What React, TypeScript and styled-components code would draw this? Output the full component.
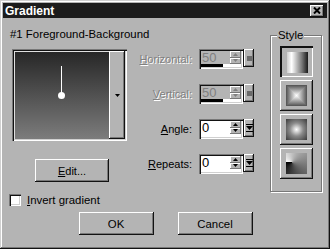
import React from "react";
import styled, { createGlobalStyle, css } from "styled-components";

const FACE = "#b4b4b4";
const SHADOW = "#787878";
const DARK = "#121212";
const LIGHT = "#ffffff";

const Global = createGlobalStyle`
  html, body { margin: 0; padding: 0; background: ${FACE}; }
  body { font-family: "Liberation Sans", Arial, sans-serif; font-size: 11px; color: #000; }
  * { box-sizing: border-box; }
`;

const raised = css`
  background: ${FACE};
  box-shadow: inset -1px -1px ${DARK}, inset 1px 1px ${LIGHT}, inset -2px -2px ${SHADOW};
`;

const Window = styled.div`
  width: 330px;
  height: 249px;
  padding: 3px;
  display: flex;
  flex-direction: column;
  background: ${FACE};
  box-shadow: inset -1px -1px ${DARK}, inset 1px 1px #d0d0d0, inset -2px -2px ${SHADOW}, inset 2px 2px ${LIGHT};
`;

const TitleBar = styled.div`
  height: 15px;
  flex: none;
  display: flex;
  align-items: center;
  justify-content: space-between;
  padding: 0 3px 0 2px;
  background: #1c1c1c;
  color: #fff;
  font-weight: bold;
  font-size: 12px;
`;

const CloseButton = styled.div`
  width: 14px;
  height: 12px;
  display: flex;
  align-items: center;
  justify-content: center;
  ${raised};
`;

const Content = styled.div`
  flex: 1;
  display: flex;
  flex-direction: column;
  padding: 0 5px 0 6px;
`;

const TopArea = styled.div`
  display: flex;
  height: 174px;
`;

const LeftCol = styled.div`
  width: 121px;
  padding-top: 10px;
  display: flex;
  flex-direction: column;
  align-items: flex-start;
`;

const SetName = styled.div`
  margin-left: 1px;
  line-height: 13px;
  white-space: nowrap;
  font-size: 11.4px;
`;

const PreviewFrame = styled.div`
  margin-top: 8px;
  margin-left: 3px;
  width: 115px;
  height: 92px;
  display: flex;
  padding: 2px;
  background: ${FACE};
  box-shadow: inset 1px 1px ${SHADOW}, inset 2px 2px ${DARK}, inset -1px -1px ${LIGHT}, inset -2px -2px #d0d0d0;
`;

const GradientArea = styled.div`
  flex: 1;
  position: relative;
  background: linear-gradient(to bottom, #262626, #7c7c7c);
  box-shadow: inset 1px 1px #e0e0e0;
`;

const HandleLine = styled.div`
  position: absolute;
  left: 47px;
  top: 15px;
  width: 1px;
  height: 27px;
  background: #fff;
`;

const HandleDot = styled.div`
  position: absolute;
  left: 44px;
  top: 41px;
  width: 7px;
  height: 7px;
  border-radius: 50%;
  background: #fff;
`;

const DropButton = styled.div`
  width: 16px;
  display: flex;
  align-items: center;
  justify-content: center;
  ${raised};
`;

const EditButton = styled.div`
  margin-top: 18px;
  margin-left: 26px;
  width: 74px;
  height: 23px;
  display: flex;
  align-items: center;
  justify-content: center;
  ${raised};
`;

const MidCol = styled.div`
  width: 124px;
  padding-top: 31px;
  display: flex;
  flex-direction: column;
  gap: 15px;
`;

const Row = styled.div`
  height: 20px;
  display: flex;
  align-items: center;
  justify-content: flex-end;
  gap: 7px;
`;

const FieldLabel = styled.span<{ $disabled?: boolean }>`
  white-space: nowrap;
  color: ${(p) => (p.$disabled ? "#808080" : "#000")};
  text-shadow: ${(p) => (p.$disabled ? "1px 1px 0 #fff" : "none")};
`;

const SpinControl = styled.div`
  display: flex;
  align-items: flex-start;
  height: 20px;
`;

const SunkenBox = styled.div`
  width: 44px;
  height: 20px;
  display: flex;
  flex-direction: column;
  padding: 2px;
  background: ${FACE};
  box-shadow: inset 1px 1px ${SHADOW}, inset 2px 2px ${DARK}, inset -1px -1px ${LIGHT}, inset -2px -2px #d0d0d0;
`;

const FieldRow = styled.div`
  flex: 1;
  display: flex;
`;

const ValueText = styled.div<{ $disabled?: boolean }>`
  flex: 1;
  font-size: 13px;
  line-height: 13px;
  padding-left: 1px;
  background: ${(p) => (p.$disabled ? FACE : "#fff")};
  color: ${(p) => (p.$disabled ? "#808080" : "#000")};
`;

const SpinCol = styled.div`
  width: 11px;
  display: flex;
  flex-direction: column;
`;

const SpinBtn = styled.div`
  flex: 1;
  display: flex;
  align-items: center;
  justify-content: center;
  background: ${FACE};
  box-shadow: inset -1px -1px ${SHADOW}, inset 1px 1px ${LIGHT};
`;

const Bar = styled.div`
  height: 3px;
  background: #fff;
  display: flex;
`;

const BarFill = styled.div`
  background: #000;
  height: 100%;
`;

const PopButton = styled.div`
  width: 11px;
  height: 18px;
  display: flex;
  align-items: center;
  justify-content: center;
  border-left: 1px solid ${DARK};
  ${raised};
`;

const GrayBlock = styled.div`
  width: 5px;
  height: 5px;
  background: #6a6a6a;
`;

const StyleGroup = styled.div`
  margin-left: auto;
  margin-top: 17px;
  width: 52px;
  height: 157px;
  border: 1px solid ${SHADOW};
  box-shadow: inset 1px 1px ${LIGHT}, 1px 1px 0 ${LIGHT};
  display: flex;
  flex-direction: column;
  align-items: center;
`;

const Caption = styled.div`
  align-self: flex-start;
  margin-top: -7px;
  margin-left: 6px;
  padding: 0 1px;
  line-height: 13px;
  font-size: 11.4px;
  background: ${FACE};
`;

const StyleList = styled.div`
  margin-top: 4px;
  display: flex;
  flex-direction: column;
  gap: 3px;
`;

const StyleBtn = styled.div<{ $pressed?: boolean }>`
  width: 33px;
  height: 31px;
  display: flex;
  align-items: center;
  justify-content: center;
  padding: ${(p) => (p.$pressed ? "2px 0 0 2px" : "0")};
  background: ${FACE};
  box-shadow: ${(p) =>
    p.$pressed
      ? `inset 1px 1px ${DARK}, inset 2px 2px ${DARK}, inset -1px -1px ${LIGHT}`
      : `inset -1px -1px ${DARK}, inset 1px 1px ${LIGHT}, inset -2px -2px ${SHADOW}`};
`;

const swatchBg: Record<string, string> = {
  linear: "background: linear-gradient(to right, #cfcfcf 0%, #fff 22%, #7a7a7a 70%, #1a1a1a 100%);",
  rect: "background: linear-gradient(to right, #505050, #fff, #505050), linear-gradient(to bottom, #505050, #fff, #505050); background-blend-mode: darken;",
  radial: "background: radial-gradient(circle, #fff 0%, #8a8a8a 45%, #3a3a3a 100%);",
  sunburst: "background: conic-gradient(from 270deg at 30% 45%, #fff, #000);",
};

const Swatch = styled.div<{ $kind: string }>`
  width: 21px;
  height: 21px;
  ${(p) => swatchBg[p.$kind]}
`;

const CheckRow = styled.label`
  margin-top: 2px;
  height: 12px;
  display: flex;
  align-items: center;
  gap: 6px;
  font-size: 11.4px;
`;

const CheckBox = styled.div`
  width: 12px;
  height: 12px;
  background: #fff;
  box-shadow: inset 1px 1px ${SHADOW}, inset 2px 2px ${DARK}, inset -1px -1px ${LIGHT}, inset -2px -2px #d0d0d0;
`;

const ButtonRow = styled.div`
  margin-top: 6px;
  display: flex;
  justify-content: center;
  gap: 24px;
`;

const DialogButton = styled.div`
  width: 75px;
  height: 23px;
  display: flex;
  align-items: center;
  justify-content: center;
  font-size: 11.4px;
  ${raised};
`;

const Arrow = ({ up, color }: { up?: boolean; color: string }) => (
  <svg width="5" height="3" viewBox="0 0 5 3">
    <path d={up ? "M2.5 0 L5 3 L0 3 Z" : "M0 0 L5 0 L2.5 3 Z"} fill={color} />
  </svg>
);

const PopIcon = () => (
  <svg width="7" height="9" viewBox="0 0 7 9">
    <rect x="0" y="0" width="7" height="1" fill="#000" />
    <path d="M0 2 L7 2 L3.5 6 Z" fill="#000" />
    <rect x="0" y="7" width="7" height="1" fill="#000" />
  </svg>
);

type SpinProps = { value: string; disabled?: boolean; fill: number };

const Spin = ({ value, disabled, fill }: SpinProps) => {
  const arrow = disabled ? "#808080" : "#000";
  return (
    <SpinControl>
      <SunkenBox>
        <FieldRow>
          <ValueText $disabled={disabled}>{value}</ValueText>
          <SpinCol>
            <SpinBtn>
              <Arrow up color={arrow} />
            </SpinBtn>
            <SpinBtn>
              <Arrow color={arrow} />
            </SpinBtn>
          </SpinCol>
        </FieldRow>
        <Bar>
          <BarFill style={{ width: `${fill * 100}%` }} />
        </Bar>
      </SunkenBox>
      <PopButton>{disabled ? <GrayBlock /> : <PopIcon />}</PopButton>
    </SpinControl>
  );
};

const rows = [
  { key: "H", rest: "orizontal:", value: "50", disabled: true, fill: 0.55 },
  { key: "V", rest: "ertical:", value: "50", disabled: true, fill: 0.55 },
  { key: "A", rest: "ngle:", value: "0", disabled: false, fill: 0 },
  { key: "R", rest: "epeats:", value: "0", disabled: false, fill: 0 },
];

const styles = ["linear", "rect", "radial", "sunburst"];

export default function App() {
  return (
    <>
      <Global />
      <Window>
        <TitleBar>
          <span>Gradient</span>
          <CloseButton>
            <svg width="8" height="7" viewBox="0 0 8 7">
              <path d="M1 0.5 L7 6.5 M7 0.5 L1 6.5" stroke="#000" strokeWidth="2" />
            </svg>
          </CloseButton>
        </TitleBar>
        <Content>
          <TopArea>
            <LeftCol>
              <SetName>#1 Foreground-Background</SetName>
              <PreviewFrame>
                <GradientArea>
                  <HandleLine />
                  <HandleDot />
                </GradientArea>
                <DropButton>
                  <Arrow color="#000" />
                </DropButton>
              </PreviewFrame>
              <EditButton>
                <span>
                  <u>E</u>dit...
                </span>
              </EditButton>
            </LeftCol>
            <MidCol>
              {rows.map((r) => (
                <Row key={r.key}>
                  <FieldLabel $disabled={r.disabled}>
                    <u>{r.key}</u>
                    {r.rest}
                  </FieldLabel>
                  <Spin value={r.value} disabled={r.disabled} fill={r.fill} />
                </Row>
              ))}
            </MidCol>
            <StyleGroup>
              <Caption>Style</Caption>
              <StyleList>
                {styles.map((s, i) => (
                  <StyleBtn key={s} $pressed={i === 0}>
                    <Swatch $kind={s} />
                  </StyleBtn>
                ))}
              </StyleList>
            </StyleGroup>
          </TopArea>
          <CheckRow>
            <CheckBox />
            <span>
              <u>I</u>nvert gradient
            </span>
          </CheckRow>
          <ButtonRow>
            <DialogButton>OK</DialogButton>
            <DialogButton>Cancel</DialogButton>
          </ButtonRow>
        </Content>
      </Window>
    </>
  );
}
